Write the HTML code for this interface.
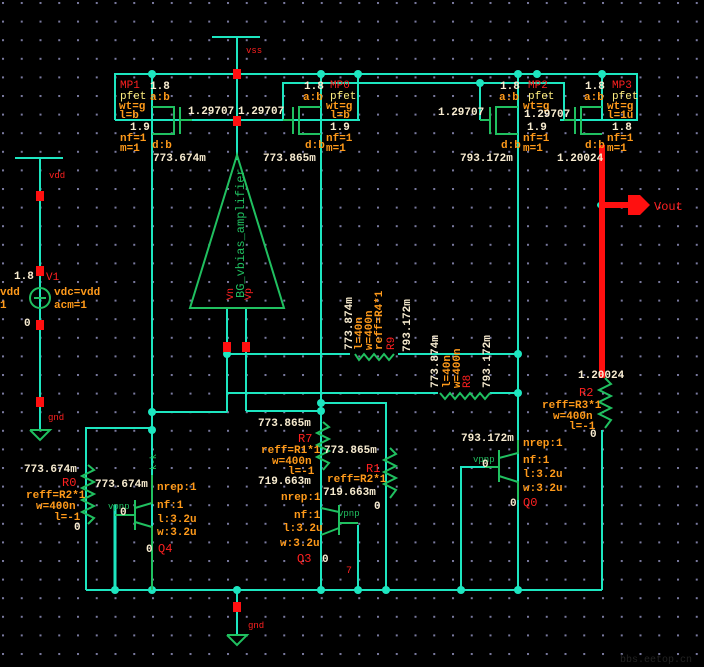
<!DOCTYPE html>
<html><head><meta charset="utf-8"><style>
html,body{margin:0;padding:0;background:#000;}
svg{display:block}
text{font-family:"Liberation Mono",monospace;font-size:11px;}
.v{fill:#f8ecd0;font-weight:bold}.o{fill:#ff9a1a;font-weight:bold}.r{fill:#ff2020}.y{fill:#ffee80}.g{fill:#20c060}
</style></head><body>
<svg width="704" height="667" viewBox="0 0 704 667" xmlns="http://www.w3.org/2000/svg">
<defs>
<pattern id="dots" x="2" y="2" width="18.75" height="18.6" patternUnits="userSpaceOnUse">
<rect x="0" y="0" width="2" height="2" fill="#7a7aa0"/>
</pattern>
</defs>
<rect width="704" height="667" fill="#000"/>
<rect width="704" height="667" fill="url(#dots)"/>

<g stroke="#1de6c0" stroke-width="2" fill="none">
<line x1="212" y1="37" x2="260" y2="37"/>
<line x1="237" y1="37" x2="237" y2="160"/>
<polyline points="115,120 115,74 637,74 637,120 560,120"/>
<line x1="115" y1="120" x2="360" y2="120"/>
<line x1="358" y1="74" x2="358" y2="120"/>
<polyline points="283,120 283,83 564,83 564,120"/>
<line x1="480" y1="83" x2="480" y2="120"/>
<line x1="152" y1="74" x2="152" y2="590"/>
<line x1="321" y1="74" x2="321" y2="590"/>
<line x1="518" y1="74" x2="518" y2="590"/>
<line x1="602" y1="74" x2="602" y2="120"/>
<polyline points="86,590 86,428 152,428"/>
<line x1="86" y1="590" x2="602" y2="590"/>
<line x1="602" y1="430" x2="602" y2="590"/>
<line x1="237" y1="590" x2="237" y2="635"/>
<line x1="227" y1="308" x2="227" y2="412"/>
<line x1="246" y1="308" x2="246" y2="411"/>
<line x1="227" y1="354" x2="350" y2="354"/>
<line x1="398" y1="354" x2="518" y2="354"/>
<line x1="152" y1="412" x2="227" y2="412"/>
<line x1="227" y1="393" x2="438" y2="393"/>
<line x1="490" y1="393" x2="518" y2="393"/>
<polyline points="246,411 321,411"/>
<polyline points="321,403 386,403 386,590"/>
<line x1="358" y1="525" x2="358" y2="590"/>
<polyline points="461,590 461,467 485,467"/>
<line x1="15" y1="158" x2="63" y2="158"/>
<line x1="40" y1="158" x2="40" y2="430"/>
</g>
<line x1="115" y1="505" x2="115" y2="590" stroke="#1de6c0" stroke-width="3"/>

<g fill="#1de6c0">
<circle cx="152" cy="74" r="4"/><circle cx="321" cy="74" r="4"/><circle cx="358" cy="74" r="4"/>
<circle cx="518" cy="74" r="4"/><circle cx="537" cy="74" r="4"/><circle cx="602" cy="74" r="4"/>
<circle cx="480" cy="83" r="4"/>
<circle cx="227" cy="354" r="4"/><circle cx="152" cy="412" r="4"/><circle cx="152" cy="430" r="4"/>
<circle cx="321" cy="403" r="4"/><circle cx="321" cy="411" r="4"/>
<circle cx="518" cy="354" r="4"/><circle cx="518" cy="393" r="4"/>
<circle cx="115" cy="590" r="4"/><circle cx="152" cy="590" r="4"/><circle cx="237" cy="590" r="4"/>
<circle cx="321" cy="590" r="4"/><circle cx="358" cy="590" r="4"/><circle cx="386" cy="590" r="4"/>
<circle cx="461" cy="590" r="4"/><circle cx="518" cy="590" r="4"/><circle cx="600" cy="205" r="3"/>
</g>

<g stroke="#20c060" stroke-width="2" fill="none">
<polyline points="152,107 174,107 174,134 152,134"/><line x1="180" y1="107" x2="180" y2="134"/><line x1="180" y1="120" x2="192" y2="120"/>
<polyline points="321,107 299,107 299,134 321,134"/><line x1="293" y1="107" x2="293" y2="134"/><line x1="293" y1="120" x2="283" y2="120"/>
<polyline points="518,107 496,107 496,134 518,134"/><line x1="490" y1="107" x2="490" y2="134"/><line x1="490" y1="120" x2="480" y2="120"/>
<polyline points="602,107 581,107 581,134 602,134"/><line x1="575" y1="107" x2="575" y2="134"/><line x1="575" y1="120" x2="564" y2="120"/>
<polygon points="237,155 190,308 284,308"/>
<polyline points="88,465 94,470 82,476 94,482 82,488 94,494 82,500 94,506 82,512 94,518 88,524"/>
<polyline points="323,422 329,427 317,433 329,439 317,445 329,451 317,457 329,463 323,470"/>
<polyline points="390,448 396,454 384,460 396,466 384,472 396,478 384,484 396,490 390,498"/>
<polyline points="605,378 611,384 599,390 611,396 599,402 611,408 599,414 611,420 605,428"/>
<polyline points="355,354 359,360 364,354 369,360 374,354 379,360 384,354 389,360 394,354"/>
<polyline points="440,393 445,399 450,393 455,399 460,393 465,399 470,393 475,399 480,393 485,399 490,393"/>
<line x1="135" y1="500" x2="135" y2="530"/><polyline points="135,508 152,503 152,475"/><polyline points="135,522 152,527 152,590"/><line x1="115" y1="515" x2="135" y2="515"/>
<line x1="339" y1="505" x2="339" y2="535"/><polyline points="339,512 321,508"/><polyline points="339,528 321,535"/><line x1="339" y1="523" x2="358" y2="523"/>
<line x1="499" y1="450" x2="499" y2="482"/><polyline points="499,458 518,453 518,440"/><polyline points="499,476 518,482 518,500"/><line x1="485" y1="467" x2="499" y2="467"/>
<circle cx="40" cy="298" r="10"/>
<line x1="34" y1="298" x2="46" y2="298"/>
<polyline points="30,430 50,430 40,440 30,430"/>
<polyline points="227,635 247,635 237,645 227,635"/>
</g>

<g fill="#ff1010">
<rect x="233" y="69" width="8" height="10"/><rect x="233" y="116" width="8" height="10"/>
<rect x="36" y="191" width="8" height="10"/><rect x="36" y="266" width="8" height="10"/>
<rect x="36" y="320" width="8" height="10"/><rect x="36" y="397" width="8" height="10"/>
<rect x="223" y="342" width="8" height="10"/><rect x="242" y="342" width="8" height="10"/>
<rect x="233" y="602" width="8" height="10"/>
<rect x="599" y="145" width="6" height="233"/>
<rect x="602" y="202" width="28" height="6"/>
<polygon points="628,195 640,195 650,205 640,215 628,215"/>
</g>

<text x="246" y="53" class="r" style="font-size:9px">vss</text>
<text x="49" y="178" class="r" style="font-size:9px">vdd</text>
<text x="248" y="628" class="r" style="font-size:9px">gnd</text>
<text x="48" y="420" class="r" style="font-size:9px">gnd</text>
<text x="654" y="210" class="r" style="font-size:12px">Vout</text>

<text x="120" y="88" class="r">MP1</text><text x="150" y="89" class="v">1.8</text>
<text x="120" y="99" class="y">pfet</text><text x="150" y="100" class="o">a:b</text>
<text x="119" y="109" class="o">wt=g</text><text x="119" y="118" class="o">l=b</text>
<text x="130" y="130" class="v">1.9</text>
<text x="120" y="141" class="o">nf=1</text><text x="120" y="151" class="o">m=1</text><text x="152" y="148" class="o">d:b</text>
<text x="153" y="161" class="v">773.674m</text>
<text x="188" y="114" class="v">1.29707</text><text x="238" y="114" class="v">1.29707</text>

<text x="330" y="88" class="r">MP0</text><text x="304" y="89" class="v">1.8</text>
<text x="330" y="99" class="y">pfet</text><text x="303" y="100" class="o">a:b</text>
<text x="326" y="109" class="o">wt=g</text><text x="330" y="118" class="o">l=b</text>
<text x="330" y="130" class="v">1.9</text>
<text x="326" y="141" class="o">nf=1</text><text x="326" y="151" class="o">m=1</text><text x="305" y="148" class="o">d:b</text>
<text x="263" y="161" class="v">773.865m</text>

<text x="528" y="88" class="r">MP2</text><text x="500" y="89" class="v">1.8</text>
<text x="528" y="99" class="y">pfet</text><text x="499" y="100" class="o">a:b</text>
<text x="523" y="109" class="o">wt=g</text><text x="524" y="117" class="v">1.29707</text>
<text x="438" y="115" class="v">1.29707</text>
<text x="527" y="130" class="v">1.9</text>
<text x="523" y="141" class="o">nf=1</text><text x="523" y="151" class="o">m=1</text><text x="501" y="148" class="o">d:b</text>
<text x="460" y="161" class="v">793.172m</text>

<text x="612" y="88" class="r">MP3</text><text x="585" y="89" class="v">1.8</text>
<text x="612" y="99" class="y">pfet</text><text x="584" y="100" class="o">a:b</text>
<text x="607" y="109" class="o">wt=g</text><text x="607" y="118" class="o">l=1u</text>
<text x="612" y="130" class="v">1.8</text>
<text x="607" y="141" class="o">nf=1</text><text x="607" y="151" class="o">m=1</text><text x="585" y="148" class="o">d:b</text>
<text x="557" y="161" class="v">1.20024</text>

<text transform="translate(244,298) rotate(-90)" class="g" style="font-size:12px">BG_vbias_amplifier</text>
<text transform="translate(233,300) rotate(-90)" class="r" style="font-size:10px">Vn</text>
<text transform="translate(251,300) rotate(-90)" class="r" style="font-size:10px">Vp</text>

<text x="14" y="279" class="v">1.8</text><text x="46" y="280" class="r">V1</text>
<text x="0" y="295" class="o">vdd</text><text x="54" y="295" class="o">vdc=vdd</text>
<text x="0" y="308" class="o">1</text><text x="54" y="308" class="o">acm=1</text>
<text x="24" y="326" class="v">0</text>

<text transform="translate(352,350) rotate(-90)" class="v">773.874m</text>
<text transform="translate(362,350) rotate(-90)" class="o">l=40n</text>
<text transform="translate(372,350) rotate(-90)" class="o">w=400n</text>
<text transform="translate(382,350) rotate(-90)" class="o">reff=R4*1</text>
<text transform="translate(394,350) rotate(-90)" class="r">R9</text>
<text transform="translate(410,352) rotate(-90)" class="v">793.172m</text>
<text transform="translate(438,388) rotate(-90)" class="v">773.874m</text>
<text transform="translate(450,388) rotate(-90)" class="o">l=40n</text>
<text transform="translate(460,388) rotate(-90)" class="o">w=400n</text>
<text transform="translate(470,388) rotate(-90)" class="r">R8</text>
<text transform="translate(490,388) rotate(-90)" class="v">793.172m</text>

<text x="24" y="472" class="v">773.674m</text>
<text x="62" y="486" class="r" style="font-size:12px">R0</text>
<text x="26" y="498" class="o">reff=R2*1</text>
<text x="36" y="509" class="o">w=400n</text>
<text x="54" y="520" class="o">l=-1</text>
<text x="74" y="530" class="v">0</text>
<text x="95" y="487" class="v">773.674m</text>
<text x="157" y="490" class="o">nrep:1</text>
<text x="157" y="508" class="o">nf:1</text>
<text x="157" y="522" class="o">l:3.2u</text>
<text x="157" y="535" class="o">w:3.2u</text>
<text x="108" y="509" class="g" style="font-size:9px">vpnp</text>
<text x="120" y="515" class="v">0</text>
<text x="146" y="552" class="v">0</text><text x="158" y="552" class="r" style="font-size:12px">Q4</text>
<text transform="translate(156,470) rotate(-90)" class="g" style="font-size:9px">k-k</text>

<text x="258" y="426" class="v">773.865m</text>
<text x="298" y="442" class="r" style="font-size:12px">R7</text>
<text x="261" y="453" class="o">reff=R1*1</text>
<text x="272" y="464" class="o">w=400n</text>
<text x="288" y="474" class="o">l=-1</text>
<text x="258" y="484" class="v">719.663m</text>
<text x="281" y="500" class="o">nrep:1</text>
<text x="294" y="518" class="o">nf:1</text>
<text x="283" y="531" class="o">l:3.2u</text>
<text x="280" y="546" class="o">w:3.2u</text>
<text x="297" y="562" class="r" style="font-size:12px">Q3</text><text x="322" y="562" class="v">0</text>
<text x="346" y="573" class="r" style="font-size:10px">7</text>
<text x="324" y="453" class="v">773.865m</text>
<text x="366" y="472" class="r" style="font-size:12px">R1</text>
<text x="327" y="482" class="o">reff=R2*1</text>
<text x="323" y="495" class="v">719.663m</text>
<text x="374" y="509" class="v">0</text>
<text x="338" y="516" class="g" style="font-size:9px">vpnp</text>

<text x="578" y="378" class="v">1.20024</text>
<text x="579" y="396" class="r" style="font-size:12px">R2</text>
<text x="542" y="408" class="o">reff=R3*1</text>
<text x="553" y="419" class="o">w=400n</text>
<text x="569" y="429" class="o">l=-1</text>
<text x="590" y="437" class="v">0</text>
<text x="461" y="441" class="v">793.172m</text>
<text x="523" y="446" class="o">nrep:1</text>
<text x="523" y="463" class="o">nf:1</text>
<text x="523" y="477" class="o">l:3.2u</text>
<text x="523" y="491" class="o">w:3.2u</text>
<text x="473" y="462" class="g" style="font-size:9px">vpnp</text>
<text x="482" y="467" class="v">0</text>
<text x="510" y="506" class="v">0</text><text x="523" y="506" class="r" style="font-size:12px">Q0</text>
<text x="620" y="662" fill="#222" style="font-size:10px">bbs.eetop.cn</text>
</svg>
</body></html>
